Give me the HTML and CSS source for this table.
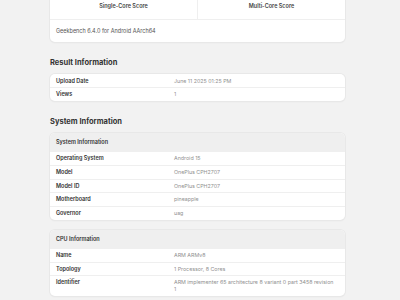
FILE: index.html
```html
<!DOCTYPE html>
<html lang="en">
<head>
  <meta charset="UTF-8" />
  <title>Geekbench Result</title>
  <link rel="stylesheet" href="styles.css">
</head>
<body>
  <div class="main">
    <div class="card score-card">
      <div class="scores">
        <div class="score">Single-Core Score</div>
        <div class="score">Multi-Core Score</div>
      </div>
      <div class="version">Geekbench 6.4.0 for Android AArch64</div>
    </div>

    <h2 class="section-title">Result Information</h2>
    <div class="card">
      <div class="row"><div class="name">Upload Date</div><div class="value">June 11 2025 01:25 PM</div></div>
      <div class="row"><div class="name">Views</div><div class="value">1</div></div>
    </div>

    <h2 class="section-title">System Information</h2>
    <div class="card">
      <div class="card-head">System Information</div>
      <div class="row"><div class="name">Operating System</div><div class="value">Android 15</div></div>
      <div class="row"><div class="name">Model</div><div class="value">OnePlus CPH2707</div></div>
      <div class="row"><div class="name">Model ID</div><div class="value">OnePlus CPH2707</div></div>
      <div class="row"><div class="name">Motherboard</div><div class="value">pineapple</div></div>
      <div class="row"><div class="name">Governor</div><div class="value">uag</div></div>
    </div>

    <div class="card">
      <div class="card-head">CPU Information</div>
      <div class="row"><div class="name">Name</div><div class="value">ARM ARMv8</div></div>
      <div class="row"><div class="name">Topology</div><div class="value">1 Processor, 8 Cores</div></div>
      <div class="row"><div class="name">Identifier</div><div class="value">ARM implementer 65 architecture 8 variant 0 part 3458 revision 1</div></div>
    </div>
  </div>
</body>
</html>
```

FILE: styles.css
```css
body, html {
  margin: 0;
  padding: 0;
  background: #f2f2f2;
  font-family: Inter, "Noto Sans", sans-serif;
  color: #333;
  overflow: hidden;
}
.main {
  width: 295px;
  margin: -12px 0 0 50px;
}

.card {
  background: #fff;
  border-radius: 5px;
  box-shadow: 0 0 0 1px #e8e8e8, 0 1px 2px rgba(0, 0, 0, 0.06);
  overflow: hidden;
  margin-bottom: 10px;
}

.scores {
  display: flex;
  border-bottom: 1px solid #efefef;
}
.score {
  flex: 1;
  text-align: center;
  font-size: 5.5px;
  font-weight: 600;
  color: #444;
  padding: 15px 0 9px;
  line-height: 7px;
}
.score + .score {
  border-left: 1px solid #efefef;
}
.version {
  font-size: 5.5px;
  color: #555;
  padding: 8px 6px;
  line-height: 6px;
}

.section-title {
  font-size: 7.5px;
  font-weight: 700;
  color: #333;
  margin: 16px 0 6px;
  line-height: 10px;
}

.card-head {
  background: #efefef;
  font-size: 5.5px;
  font-weight: 600;
  color: #333;
  padding: 6px;
  line-height: 6px;
}

.row {
  display: flex;
  border-top: 1px solid #efefef;
  font-size: 5.5px;
  line-height: 7px;
  padding: 3px 6px 2.75px;
}
.card > .row:first-child {
  border-top: none;
  padding-top: 3.5px;
}
.name {
  width: 118px;
  flex-shrink: 0;
  font-weight: 600;
  color: #333;
}
.value {
  flex: 1;
  font-size: 5.3px;
  color: #909090;
  padding-right: 4px;
}
```
